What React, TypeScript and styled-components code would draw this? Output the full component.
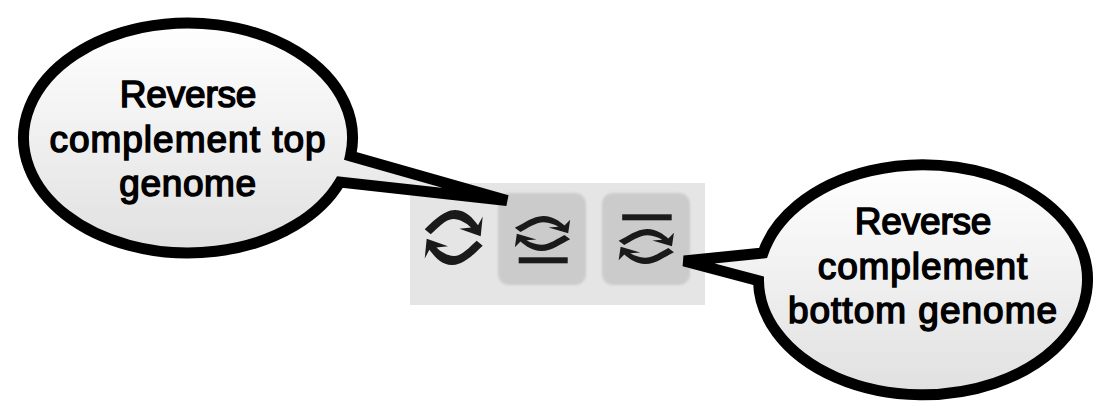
import React from "react";
import styled, { createGlobalStyle } from "styled-components";

const GlobalStyle = createGlobalStyle`
  body { margin: 0; background: #fff; }
`;

const Canvas = styled.main`
  position: relative;
  display: flex;
  align-items: flex-start;
  box-sizing: border-box;
  width: 1110px;
  height: 414px;
  padding: 183px 0 0 410px;
  overflow: hidden;
  background: #fff;
`;

const Toolbar = styled.div`
  display: flex;
  box-sizing: border-box;
  width: 295px;
  height: 122px;
  padding-top: 10px;
  background: #e5e5e5;
`;

const ToolButton = styled.button<{ $filled?: boolean; $gap?: number }>`
  flex: none;
  position: relative;
  width: 88px;
  height: 92px;
  margin: 0 ${(p) => p.$gap ?? 0}px 0 0;
  padding: 0;
  border: 0;
  background: none;

  &::before {
    content: "";
    position: absolute;
    inset: 0;
    border-radius: 11px;
    background: ${(p) => (p.$filled ? "#cbcbcb" : "transparent")};
    filter: blur(0.8px);
  }
`;

const Icon = styled.svg`
  position: relative;
  display: block;
  fill: #1a1a1a;
  filter: blur(0.6px);
`;

const Callout = styled.section<{ $x: number; $y: number }>`
  position: absolute;
  left: ${(p) => p.$x}px;
  top: ${(p) => p.$y}px;
  width: 340px;
  height: 242px;
`;

const Bubble = styled.svg`
  position: absolute;
  inset: 0;
  overflow: visible;
  stroke: #000;
  stroke-width: 11;
`;

const Label = styled.p<{ $top: number }>`
  position: relative;
  margin: 0;
  padding-top: ${(p) => p.$top}px;
  color: #000;
  font: 400 37px/44.6px "Liberation Sans", Arial, sans-serif;
  text-align: center;
  -webkit-text-stroke: 1.5px #000;
`;

const Line = styled.span<{ $tracking: number }>`
  display: block;
  letter-spacing: ${(p) => p.$tracking}px;
`;

const LARGE_ARROW =
  "M-87-24.5C-65-45-32-82 4-82.5C38-83 58-56 73-37L87-63L81-3.5L17-26.5L52-30C39-43 18-55-1-55.5C-24-56-49-27-69-9.5Z";
const SMALL_ARROW =
  "M-83-17C-56-30-29-52 2-52.5C31-53 50-37 66-24L83-41L77-1L18-18L48-20C36-27 20-33 4-33.5C-20-34-45-15-66-4.5Z";

interface ArrowsProps {
  x: number;
  y: number;
  shape: string;
}

const Arrows = ({ x, y, shape }: ArrowsProps) => (
  <g transform={`translate(${x} ${y}) scale(0.3333)`}>
    <path d={shape} />
    <path d={shape} transform="rotate(180)" />
  </g>
);

interface SpeechProps {
  id: string;
  x: number;
  y: number;
  path: string;
  textTop: number;
  lines: [string, number][];
}

const Speech = ({ id, x, y, path, textTop, lines }: SpeechProps) => (
  <Callout $x={x} $y={y}>
    <Bubble width="340" height="242" viewBox="0 0 340 242">
      <defs>
        <linearGradient id={id} gradientUnits="userSpaceOnUse" x1="0" y1="6" x2="0" y2="236">
          <stop offset="0" stopColor="#fff" />
          <stop offset="1" stopColor="#e0e0e0" />
        </linearGradient>
      </defs>
      <path d={path} fill={`url(#${id})`} />
    </Bubble>
    <Label $top={textTop}>
      {lines.map(([text, tracking]) => (
        <Line key={text} $tracking={tracking}>
          {text}
        </Line>
      ))}
    </Label>
  </Callout>
);

export default function App() {
  return (
    <>
      <GlobalStyle />
      <Canvas>
        <Toolbar>
          <ToolButton aria-label="Reverse complement both">
            <Icon width="88" height="92" viewBox="0 0 88 92">
              <Arrows x={43.7} y={44.5} shape={LARGE_ARROW} />
            </Icon>
          </ToolButton>
          <ToolButton $filled $gap={15.5} aria-label="Reverse complement top">
            <Icon width="88" height="92" viewBox="0 0 88 92">
              <Arrows x={44.5} y={40.5} shape={SMALL_ARROW} />
              <rect x="20.7" y="64.3" width="49" height="6" />
            </Icon>
          </ToolButton>
          <ToolButton $filled aria-label="Reverse complement bottom">
            <Icon width="88" height="92" viewBox="0 0 88 92">
              <rect x="20.2" y="21.3" width="49.5" height="6" />
              <Arrows x={44.3} y={53.5} shape={SMALL_ARROW} />
            </Icon>
          </ToolButton>
        </Toolbar>
        <Speech
          id="topFill"
          x={18}
          y={17}
          path="M332.5 139L489 183.5L322 165A164.5 115 0 1 1 332.5 139Z"
          textTop={56}
          lines={[
            ["Reverse", -0.2],
            ["complement top", 1],
            ["genome", 0.6],
          ]}
        />
        <Speech
          id="bottomFill"
          x={753}
          y={159}
          path="M10 94L-69 102L5.5 121.7A164.5 115 0 1 0 10 94Z"
          textTop={41}
          lines={[
            ["Reverse", -0.2],
            ["complement", 0.9],
            ["bottom genome", 1],
          ]}
        />
      </Canvas>
    </>
  );
}
